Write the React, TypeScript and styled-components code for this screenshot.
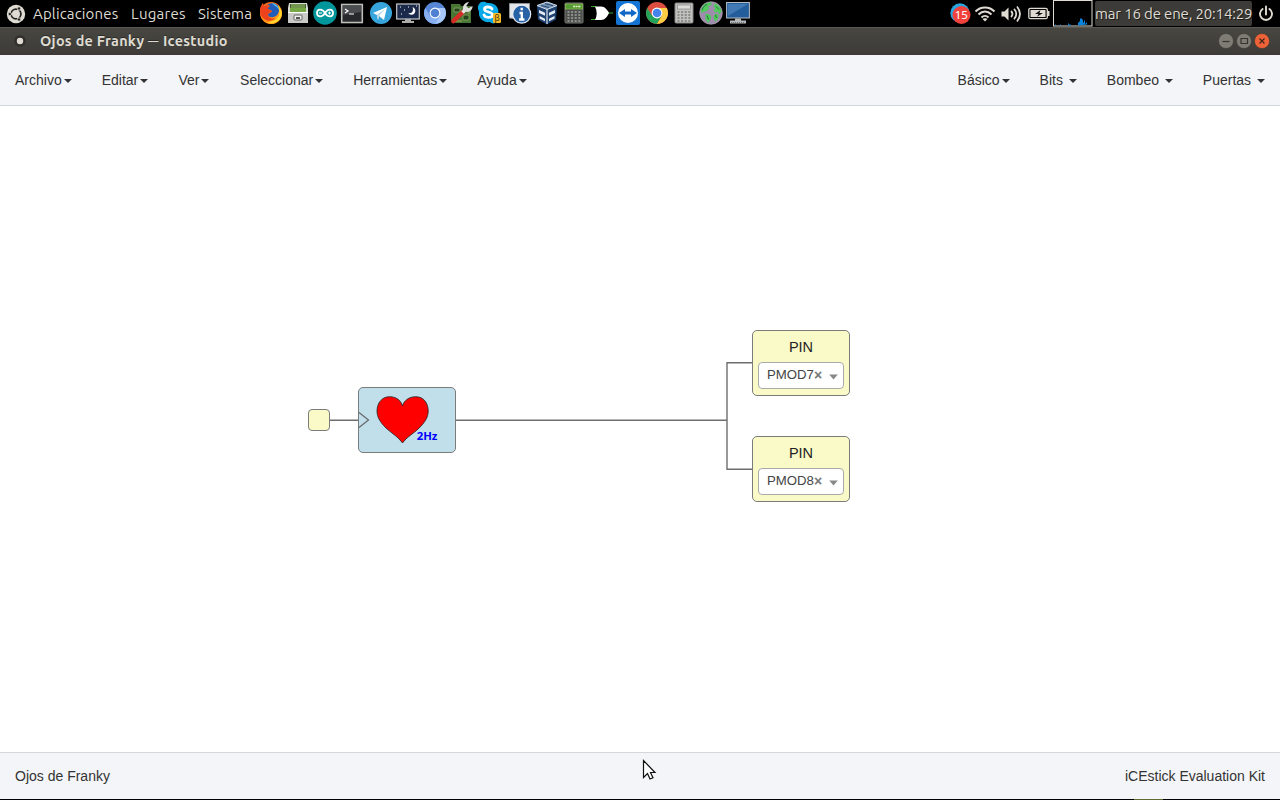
import React from "react";
import styled, { createGlobalStyle } from "styled-components";

const GlobalStyle = createGlobalStyle`
  * { box-sizing: border-box; }
  body { margin: 0; background: #fff; overflow: hidden; }
`;

const Screen = styled.div`
  display: flex;
  flex-direction: column;
  width: 1280px;
  height: 800px;
  overflow: hidden;
  background: #fff;
  font-family: "Liberation Sans", Arial, sans-serif;
`;

const Panel = styled.header`
  display: flex;
  align-items: center;
  height: 27px;
  flex: none;
  background: #000;
  color: #dfdbd2;
  font-family: Ubuntu, "Noto Sans", sans-serif;
  font-size: 15px;
`;

const Logo = styled.div`
  display: flex;
  width: 33px;
  padding-left: 6px;
`;

const PanelMenu = styled.div<{ $width: number; $spacing: number }>`
  width: ${(p) => p.$width}px;
  font-size: 15px;
  line-height: 27px;
  height: 27px;
  letter-spacing: ${(p) => p.$spacing}px;
  white-space: nowrap;
`;

const Launcher = styled.div<{ $gap: number }>`
  display: flex;
  flex: none;
  width: 24px;
  height: 24px;
  margin-left: ${(p) => p.$gap}px;
  margin-bottom: 1px;
`;

const Tray = styled.div`
  display: flex;
  align-items: center;
  height: 27px;
  margin-left: auto;
`;

const TrayItem = styled.div<{ $width: number }>`
  display: flex;
  justify-content: center;
  flex: none;
  width: ${(p) => p.$width}px;
`;

const Clock = styled.div`
  width: 157px;
  height: 25px;
  margin: 0 0 1px 2px;
  border-radius: 2px;
  background: #3c3b37;
  font-size: 15px;
  line-height: 25px;
  letter-spacing: -0.16px;
  text-align: center;
  white-space: nowrap;
  text-shadow: 1px 1px 0 #1c1b19;
`;

const TitleBar = styled.div`
  display: flex;
  align-items: center;
  flex: none;
  height: 28px;
  padding: 0 10.5px 0 12px;
  border-top: 1px solid #5a5852;
  border-bottom: 1px solid #403936;
  background: linear-gradient(#474641, #3d3c38);
  color: #dfdbd2;
`;

const WindowTitle = styled.div`
  display: flex;
  gap: 4px;
  margin-left: 12px;
  font: 600 14.4px/26px Ubuntu, "Noto Sans", sans-serif;
  letter-spacing: 0.29px;
  white-space: nowrap;
  text-shadow: 0 -1px 0 #2b2a27;
`;

const TitleDash = styled.span`
  font-weight: 400;
  transform: scaleX(0.72);
  margin: 0 -2px;
`;

const WindowButtons = styled.div`
  display: flex;
  gap: 2px;
  margin-left: auto;
`;

const NavBar = styled.nav`
  display: flex;
  justify-content: space-between;
  flex: none;
  height: 51px;
  border-bottom: 1px solid #d3d6db;
  background: #f4f5f8;
`;

const NavGroup = styled.div`
  display: flex;
`;

const NavItem = styled.div<{ $extra?: number }>`
  padding: 15px ${(p) => 15 + (p.$extra || 0)}px 15px 15px;
  color: #333;
  font-size: 14px;
  line-height: 20px;
  white-space: pre;
`;

const Caret = styled.span`
  display: inline-block;
  margin-left: 2px;
  vertical-align: middle;
  border-top: 4px solid #333;
  border-right: 4px solid transparent;
  border-left: 4px solid transparent;
`;

const Canvas = styled.main`
  position: relative;
  flex: 1;
  background: #fff;
`;

const Wires = styled.svg`
  position: absolute;
  top: 0;
  left: 0;
`;

const Node = styled.div<{ $x: number; $y: number; $w: number; $h: number; $fill: string }>`
  position: absolute;
  left: ${(p) => p.$x}px;
  top: ${(p) => p.$y}px;
  width: ${(p) => p.$w}px;
  height: ${(p) => p.$h}px;
  border: 1px solid #7b7b7b;
  border-radius: ${(p) => (p.$w < 30 ? 4 : 5)}px;
  background: ${(p) => p.$fill};
`;

const PinBody = styled.div`
  display: flex;
  flex-direction: column;
  align-items: center;
  padding: 7px 5px 0;
`;

const PinName = styled.div`
  color: #222;
  font-size: 14.5px;
  line-height: 18px;
`;

const PinSelect = styled.div`
  display: flex;
  align-items: center;
  width: 86px;
  height: 27px;
  margin-top: 6px;
  padding: 0 5.5px 2px 8px;
  border: 1px solid #aaa;
  border-radius: 4px;
  background: #fff;
  color: #444;
  font-size: 13.2px;
`;

const ClearMark = styled.span`
  color: #777;
  font-weight: bold;
  font-size: 14px;
`;

const SelectArrow = styled.svg`
  margin: 5px 0 0 auto;
`;

const Footer = styled.footer`
  display: flex;
  justify-content: space-between;
  flex: none;
  height: 47px;
  padding: 0 15px;
  border-top: 1px solid #d3d6db;
  background: #f4f5f8;
  color: #333;
  font-size: 14px;
  line-height: 46px;
`;

const BottomEdge = styled.div`
  display: flex;
  flex: none;
  height: 1px;
  padding-left: 1010px;
  background: #000;
`;

const EdgeMark = styled.div`
  width: 29px;
  margin-left: 124px;
  background: #5f6b30;
`;

const Pointer = styled.svg`
  position: absolute;
  left: 641px;
  top: 759px;
`;

const Icon = ({ children }: { children: React.ReactNode }) => (
  <svg width="24" height="24" viewBox="0 0 24 24">{children}</svg>
);

const Firefox = () => (
  <Icon>
    <circle cx="12" cy="12" r="11" fill="#f56a19" />
    <circle cx="13" cy="10" r="7.8" fill="#205cb8" />
    <path d="M13 2c5 1 8 5 8 9-1-3-3-5-5-6-1-1-3-2-3-3z" fill="#49b9ee" />
    <path d="M1 10C1 6 3 4 4 2c0 2 1 3 2 3 2-1 4-1 5 0-2 1-2 2-2 3l4 2c-1 2-4 2-4 4 1 3 6 3 9 0 3-3 2-7 1-9 4 3 5 8 3 12-2 4-6 6-10 6C6 23 1 18 1 10z" fill="#ff9416" />
    <path d="M1 10c0-4 2-6 3-8 0 2 1 3 2 3 2-1 4-1 5 0-2 1-2 2-2 3l4 2c-1 2-4 2-4 4 1 3 4 4 7 3-2 3-7 4-11 1C2 16 1 13 1 10z" fill="#ee421d" />
    <path d="M19 4c5 5 5 12 0 16-4 3-8 3-11 1 5 0 10-2 12-7 1-4 0-7-1-10z" fill="#ffd62b" />
  </Icon>
);

const Cabinet = () => (
  <Icon>
    <path d="M3 2h18l1 5v15H2V7z" fill="#d9dad5" />
    <path d="M4 3h16v6H4z" fill="#3f5d29" />
    <path d="M5 4h14M5 6h14" stroke="#a8cf76" />
    <path d="M4 7h16v4H4z" fill="#76a946" />
    <path d="M2 11h20v11H2z" fill="#c9cac5" />
    <path d="M2 11.5h20" stroke="#fff" />
    <rect x="8" y="14" width="8" height="5" rx="1" fill="#f3f3f1" stroke="#62635f" />
    <path d="M10 17h4" stroke="#555" strokeWidth="2" />
  </Icon>
);

const Arduino = () => (
  <Icon>
    <circle cx="12" cy="12" r="11.8" fill="#00979c" />
    <g fill="none" stroke="#fff" strokeWidth="1.8">
      <path d="M12 12C9 7 4 8 4 12s5 5 8 0 8-4 8 0-5 5-8 0z" />
      <path d="M6 12h3M15 12h3M16.5 10.5v3" strokeWidth="1" />
    </g>
  </Icon>
);

const Terminal = () => (
  <Icon>
    <rect x="1.7" y="3.5" width="20.6" height="18" fill="#27292c" stroke="#bdbdb9" strokeWidth="1.6" />
    <path d="M3 5h18v6L3 14z" fill="#4b4c50" />
    <path d="m5 8 3 2-3 2M9 13h5" fill="none" stroke="#fff" strokeWidth="1.2" />
  </Icon>
);

const Telegram = () => (
  <Icon>
    <circle cx="12" cy="12" r="11" fill="#37a5dc" />
    <path d="m4 12 14-6-3 13-5-4-1 4-1-5z" fill="#fff" />
    <path d="m8 14 9-7-7 8-1 4z" fill="#b4d5e8" />
  </Icon>
);

const NightScreen = () => (
  <Icon>
    <rect x=".7" y="3" width="22.6" height="15" fill="#1b2a4b" stroke="#c6c8ca" strokeWidth="1.2" />
    <path d="M16.5 6a4 4 0 1 1-4.5 6c4 1 6-2 4.5-6z" fill="#fff" />
    <path d="M4 6h1M8 9h1M5 13h1M12 6h1M20 5h1" stroke="#fff" />
    <path d="M9 18h6v3H9zM6 20h12v2H6z" fill="#abadaa" />
  </Icon>
);

const Browser = ({ colors }: { colors: [string, string, string, string] }) => (
  <Icon>
    <circle cx="12" cy="12" r="11" fill={colors[0]} />
    <path d="M2.2 7A11 11 0 0 0 12 23l5-8.5-5 2.5-5-2.5z" fill={colors[1]} />
    <path d="M12 7h9.8A11 11 0 0 1 12 23l5-8.5z" fill={colors[2]} />
    <circle cx="12" cy="12" r="5.4" fill="#fff" />
    <circle cx="12" cy="12" r="4.3" fill={colors[3]} />
  </Icon>
);

const BoardTool = () => (
  <Icon>
    <path d="M1 3h9l1 2h10v17H2v-3H1z" fill="#477534" />
    <path d="M4 7h6v4H4zM13 14h6v5h-6z" fill="#27431e" stroke="#7b9f58" />
    <path d="M3 20h9M19 10v3" stroke="#a3a85f" />
    <path d="M3.3 20.2 13 10.8" stroke="#d42d25" strokeWidth="4.4" strokeLinecap="round" />
    <path d="m12.5 11.500 3-3" stroke="#e4e5e4" strokeWidth="3.500" />
    <path d="M13 8.500c-.5-4 2-7 6-7.500l-2.800 4 2.300 2.300L22.500 5c.3 4-3.500 7-7.500 5.500z" fill="#dcdedc" />
  </Icon>
);

const Skype = () => (
  <Icon>
    <path d="M3 2c3-2 5-1 7 0 8-1 13 5 11 11 2 4 1 8-3 9-2 1-4 0-5-1C6 22 1 17 2 10 0 7 1 4 3 2z" fill="#08a9e9" />
    <path d="M15 8c-1.5-2.7-7.500-2.700-7.500.3 0 3.400 8 2 8 5.400 0 3.500-7 3.500-8.500.3" fill="none" stroke="#fff" strokeWidth="2.8" strokeLinecap="round" />
    <rect x="16" y="12" width="8" height="10" rx="1.5" fill="#f7bd2b" />
    <text x="17.200" y="19.700" fontSize="9" fontFamily="DejaVu Sans" fill="#563d05">β</text>
  </Icon>
);

const Info = () => (
  <Icon>
    <path d="M1.500 2.500h20v15l-2 2-13-2-5-.500z" fill="#e3e5e8" stroke="#8d9299" />
    <circle cx="13.700" cy="13.200" r="9" fill="#2761a6" stroke="#e7edf5" strokeWidth="1.200" />
    <path d="M13.700 6.800v2.500M11.500 12h2.300v6.500m-2.700 0h5.400" fill="none" stroke="#fff" strokeWidth="2.300" />
  </Icon>
);

const Cube = () => (
  <Icon>
    <path d="m12 1 10 3.500-1 14-9 5-9-5-1-14z" fill="#1e4170" />
    <path d="m2 4.500 10-3.500 10 3.500-10 4z" fill="#7894b5" stroke="#cfdbe7" />
    <path d="M12 8.500v14.500" stroke="#dbe5ef" strokeWidth="1.200" />
    <path d="m4 9 6 2.700v3L4 12zM4.500 15l5.500 2.800v2.500L4.500 17.500zM20 9l-6 2.700v3l6-2.700zM19.500 15 14 17.800v2.500l5.500-2.800z" fill="#e4ebf2" />
    <path d="m6 4.500 8 2M10 2.700l8 2" stroke="#24456f" />
  </Icon>
);

const Calculator = ({ green = false }: { green?: boolean }) => (
  <Icon>
    <rect x="3" y="2" width="18" height="20" rx="1" fill={green ? "#4d504c" : "#c1c1bf"} stroke={green ? "#777" : "#858683"} />
    <rect x={green ? 3.500 : 5.500} y={green ? 3 : 4} width={green ? 17 : 13} height={green ? 5 : 4} fill={green ? "#549a32" : "#dddeda"} stroke={green ? "#8fc155" : "#888"} strokeWidth=".7" />
    {green && <path d="M11 5.500h8" stroke="#dceeb9" strokeWidth="1.500" strokeDasharray="2 .5" />}
    {[11, 14, 17, 20].map((y) => (
      <path key={y} d={`M5.500 ${y}h2m1.600 0h2m1.600 0h2m1.600 0h2`} stroke={green ? "#a1a39f" : "#777976"} strokeWidth="1.500" />
    ))}
  </Icon>
);

const Gate = () => (
  <Icon>
    <path d="M2 5.500h5M2 18.500h5M19 12h5" stroke="#36a52e" />
    <path d="M6 5.500h6c4 0 6.500 3.500 8 6.500-1.500 3.500-4 7-8 7H6c2.300-4 2.300-9 0-13.500z" fill="#fff" />
  </Icon>
);

const RemoteView = () => (
  <Icon>
    <rect width="24" height="24" rx="2" fill="#1474d4" />
    <circle cx="12" cy="12" r="10" fill="#fff" />
    <path d="m3 12 6-4v2.500h6V8l6 4-6 4v-2.500H9V16z" fill="#1269c5" />
  </Icon>
);

const Globe = () => (
  <Icon>
    <circle cx="12" cy="12" r="11.300" fill="#a08aae" stroke="#b7b7b7" strokeWidth=".6" />
    <path d="M4 5c2-3 6-4 9-3.500l-1 3-3 .5 1 2.500-3 3-3 .5-2 1C1.500 9 2.500 7 4 5zM15.500 2.500c4 1 6.500 4.500 7 8l-2 3-2-3-2 1-2-2 2-2-2-2zM6.500 12.500l4.500 1 1.500 3-2 3.500-1 2-3-3.500zM16 12.500l4 1.500-1 4-3 3-1.500-5z" fill="#4fc95c" />
    <path d="M3 9c1-3 3-5 5-5.500M8 14.500l1.500 4M17 5.500l3 3M16.500 14l1 3" fill="none" stroke="#27733c" />
  </Icon>
);

const Desktop = () => (
  <Icon>
    <rect x=".6" y="1.500" width="22.800" height="15.500" fill="#245d9b" stroke="#b7bdc3" />
    <path d="M2 3h20L2 15z" fill="#4279b2" />
    <path d="M9 17.500h6V20H9zM4 19.500h16v3H4z" fill="#b5b8b8" />
    <path d="M5 21.500h14" stroke="#6f7475" strokeDasharray="1 1" />
  </Icon>
);

const launchers: { gap: number; icon: React.ReactNode }[] = [
  { gap: 0, icon: <Firefox /> },
  { gap: 3, icon: <Cabinet /> },
  { gap: 3, icon: <Arduino /> },
  { gap: 3, icon: <Terminal /> },
  { gap: 5, icon: <Telegram /> },
  { gap: 3, icon: <NightScreen /> },
  { gap: 3, icon: <Browser colors={["#5686d5", "#86aff0", "#a7c7fa", "#4f80d2"]} /> },
  { gap: 3, icon: <BoardTool /> },
  { gap: 3, icon: <Skype /> },
  { gap: 7, icon: <Info /> },
  { gap: 3, icon: <Cube /> },
  { gap: 3, icon: <Calculator green /> },
  { gap: 3, icon: <Gate /> },
  { gap: 3, icon: <RemoteView /> },
  { gap: 5, icon: <Browser colors={["#dd4e40", "#24a35a", "#fccd45", "#4584ed"]} /> },
  { gap: 3, icon: <Calculator /> },
  { gap: 3, icon: <Globe /> },
  { gap: 3, icon: <Desktop /> },
];

const UbuntuLogo = () => (
  <svg width="20" height="20" viewBox="0 0 20 20">
    <circle cx="10" cy="10" r="9.2" fill="#dfdbd2" />
    <circle cx="10" cy="10" r="4.9" fill="none" stroke="#222" strokeWidth="1.8" />
    <path d="m10 10-6 0M10 10l3-6M10 10l3 6" stroke="#dfdbd2" strokeWidth="1.2" />
    <g fill="#222" stroke="#dfdbd2" strokeWidth=".8">
      <circle cx="3.8" cy="10" r="1.7" />
      <circle cx="13" cy="4.5" r="1.7" />
      <circle cx="13" cy="15.5" r="1.7" />
    </g>
  </svg>
);

const Badge = () => (
  <svg width="22" height="22" viewBox="0 0 22 22">
    <circle cx="10" cy="10" r="9.7" fill="#2ba5df" />
    <circle cx="11.5" cy="12" r="9" fill="#f0413c" />
    <text x="11.3" y="16.2" textAnchor="middle" fontSize="11.5" fontFamily="Noto Sans" fill="#fff">15</text>
  </svg>
);

const Wifi = () => (
  <svg width="22" height="20" viewBox="0 0 22 20" fill="none" stroke="#dfdbd2" strokeWidth="2">
    <path d="M1.5 7.5c5-5.5 14-5.5 19 0M4.5 10.5c4-4 9-4 13 0M7.5 13.5c2-2 5-2 7 0" />
    <path d="m8.5 15 2.5 2.5 2.5-2.5c-1-1-4-1-5 0z" fill="#dfdbd2" stroke="none" />
  </svg>
);

const Volume = () => (
  <svg width="22" height="20" viewBox="0 0 22 20" fill="none" stroke="#dfdbd2" strokeWidth="1.8">
    <path d="M1.5 7.5h3l4-4v13l-4-4h-3z" fill="#dfdbd2" stroke="none" />
    <path d="M11 7c2 2 2 4 0 6M14 4.8c3 3 3 7.400 0 10.400M17 2.500c4 5 4 10 0 15" />
  </svg>
);

const Battery = () => (
  <svg width="22" height="14" viewBox="0 0 22 14">
    <rect x=".8" y="1.3" width="18.5" height="10.4" rx="1.5" fill="none" stroke="#dfdbd2" strokeWidth="1.3" />
    <path d="M2.5 3h15v7h-15zM19.5 4h2v5h-2z" fill="#dfdbd2" />
    <path d="m12.5 3-5.500 4h3.500L9 9.800l6-3.800h-3.500z" fill="#111" />
  </svg>
);

const LoadGraph = () => (
  <svg width="40" height="27" viewBox="0 0 40 27">
    <rect x=".5" y=".5" width="38.5" height="25.5" fill="#000" stroke="#dfdbd2" />
    <path d="M2 25.500v-1h1v1zM7 25.500v-1h1v1zM15 25.500v-2h1v1h2v1zM25 25.500v-3h1v-1h1v-3h2v1h1v3h1v-2h1v3h1v-1h1v2z" fill="#0783dc" />
  </svg>
);

const Power = () => (
  <svg width="18" height="18" viewBox="0 0 18 18" fill="none" stroke="#dfdbd2" strokeWidth="1.9">
    <path d="M9 1.5v8M5.6 4a6 6 0 1 0 6.8 0" strokeLinecap="round" />
  </svg>
);

const WindowButton = ({ fill, stroke, d }: { fill: string; stroke: string; d: string }) => (
  <svg width="16" height="16" viewBox="0 0 16 16">
    <circle cx="8" cy="8" r="7.5" fill={fill} stroke="#35342f" strokeWidth=".5" />
    <path d={d} fill="none" stroke={stroke} strokeWidth="1.2" />
  </svg>
);

const Pin = ({ y, value }: { y: number; value: string }) => (
  <Node $x={752} $y={y} $w={98} $h={66} $fill="#fafac8">
    <PinBody>
      <PinName>PIN</PinName>
      <PinSelect>
        {value}
        <ClearMark>×</ClearMark>
        <SelectArrow width="9" height="6" viewBox="0 0 9 6"><path d="M.2.500h8.600L4.500 5.500z" fill="#888" /></SelectArrow>
      </PinSelect>
    </PinBody>
  </Node>
);

export default function App() {
  return (
    <Screen>
      <GlobalStyle />
      <Panel>
        <Logo><UbuntuLogo /></Logo>
        <PanelMenu $width={98} $spacing={0.15}>Aplicaciones</PanelMenu>
        <PanelMenu $width={67} $spacing={0.26}>Lugares</PanelMenu>
        <PanelMenu $width={61} $spacing={0.19}>Sistema</PanelMenu>
        {launchers.map((item, i) => (
          <Launcher key={i} $gap={item.gap}>{item.icon}</Launcher>
        ))}
        <Tray>
          <TrayItem $width={23}><Badge /></TrayItem>
          <TrayItem $width={25}><Wifi /></TrayItem>
          <TrayItem $width={28}><Volume /></TrayItem>
          <TrayItem $width={27}><Battery /></TrayItem>
          <TrayItem $width={41}><LoadGraph /></TrayItem>
          <Clock>mar 16 de ene, 20:14:29</Clock>
          <TrayItem $width={28}><Power /></TrayItem>
        </Tray>
      </Panel>
      <TitleBar>
        <svg width="16" height="16" viewBox="0 0 16 16">
          <circle cx="8" cy="8" r="5.8" fill="#302f2c" />
          <circle cx="8" cy="8" r="3.2" fill="#dfdbd2" />
        </svg>
        <WindowTitle><span>Ojos de Franky</span><TitleDash>—</TitleDash><span>Icestudio</span></WindowTitle>
        <WindowButtons>
          <WindowButton fill="#7e7c75" stroke="#35342f" d="M4.5 8.5h7" />
          <WindowButton fill="#7e7c75" stroke="#35342f" d="M5 5.5h6.5v5H5z" />
          <WindowButton fill="#ee6238" stroke="#40251c" d="m5.5 5.5 5 5m0-5-5 5" />
        </WindowButtons>
      </TitleBar>
      <NavBar>
        <NavGroup>
          {["Archivo", "Editar", "Ver", "Seleccionar", "Herramientas", "Ayuda"].map((label) => (
            <NavItem key={label} $extra={label === "Editar" ? 0.2 : label === "Ver" ? 0.6 : 0}>{label}<Caret /></NavItem>
          ))}
        </NavGroup>
        <NavGroup>
          {["Básico", "Bits ", "Bombeo ", "Puertas "].map((label) => (
            <NavItem key={label}>{label}<Caret /></NavItem>
          ))}
        </NavGroup>
      </NavBar>
      <Canvas>
        <Wires width="1280" height="646" viewBox="0 106 1280 646" fill="none" stroke="#6e6e6e" strokeWidth="1.4">
          <path d="M329 420.2h30M455 420.2h272M753 362.8h-26v106.4h26" />
        </Wires>
        <Node $x={308} $y={303} $w={22} $h={22} $fill="#fafac8" />
        <Node $x={358} $y={281} $w={98} $h={66} $fill="#c0dfea">
          <svg width="96" height="64" viewBox="359 388 96 64">
            <path d="m359 412.5 9.5 7.5-9.5 7.5" fill="none" stroke="#666" strokeWidth="1.2" />
            <path d="M402.5 443c-4-6-10-9-16.5-15-6-6-9-11-9-17 0-8 5-14.3 12.5-14.3 7 0 11.5 3.8 13 9.3 1.5-5.5 6.5-9.3 13.2-9.3 8 0 12.500 6.300 12.500 14.300 0 6-3 11-9 17-6 6-12.700 9-16.700 15z" fill="#f00" stroke="#222" strokeWidth=".8" />
            <text x="416.7" y="440" fill="#00f" fontFamily="Noto Sans" fontWeight="700" fontSize="11.2" textLength="20.7" lengthAdjust="spacingAndGlyphs">2Hz</text>
          </svg>
        </Node>
        <Pin y={224} value="PMOD7" />
        <Pin y={330} value="PMOD8" />
      </Canvas>
      <Footer>
        <span>Ojos de Franky</span>
        <span>iCEstick Evaluation Kit</span>
      </Footer>
      <BottomEdge><EdgeMark /></BottomEdge>
      <Pointer width="16" height="24" viewBox="0 0 16 24">
        <path d="M2.5 1.5v17l4-4 2.500 5.500 3-1.300-2.500-5.200h4.500z" fill="#fff" stroke="#111" strokeWidth="1.2" />
      </Pointer>
    </Screen>
  );
}
